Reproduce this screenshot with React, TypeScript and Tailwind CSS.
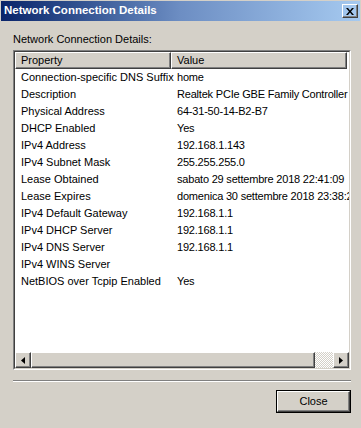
import React from "react";

const rows: [string, string][] = [
  ["Connection-specific DNS Suffix", "home"],
  ["Description", "Realtek PCIe GBE Family Controller"],
  ["Physical Address", "64-31-50-14-B2-B7"],
  ["DHCP Enabled", "Yes"],
  ["IPv4 Address", "192.168.1.143"],
  ["IPv4 Subnet Mask", "255.255.255.0"],
  ["Lease Obtained", "sabato 29 settembre 2018 22:41:09"],
  ["Lease Expires", "domenica 30 settembre 2018 23:38:25"],
  ["IPv4 Default Gateway", "192.168.1.1"],
  ["IPv4 DHCP Server", "192.168.1.1"],
  ["IPv4 DNS Server", "192.168.1.1"],
  ["IPv4 WINS Server", ""],
  ["NetBIOS over Tcpip Enabled", "Yes"],
];

// raised 3d button look
const raised =
  "border border-t-white border-l-white border-r-[#404040] border-b-[#404040] shadow-[inset_-1px_-1px_0_#808080]";

function HeaderCell({ label, className }: { label: string; className: string }) {
  return (
    <div className={`h-[17px] flex items-center pl-[5px] bg-[#d4d0c8] ${raised} ${className}`}>
      {label}
    </div>
  );
}

export default function App() {
  return (
    <div
      className="w-[361px] h-[428px] bg-[#d4d0c8] flex flex-col text-[11px] text-black overflow-hidden"
      style={{ fontFamily: '"Liberation Sans", Arial, sans-serif' }}
    >
      {/* title bar */}
      <div className="h-[20px] mx-[1px] mt-[1px] flex items-center justify-between pl-[3px] pr-[2px] bg-gradient-to-r from-[#0a246a] via-[#6d8ec3] to-[#a6caf0]">
        <span className="text-white font-bold text-[11.5px]">Network Connection Details</span>
        <button className={`w-[16px] h-[14px] flex items-center justify-center ${raised}`}>
          <svg width="8" height="7" viewBox="0 0 8 7">
            <path d="M0 0h2l2 2.5L6 0h2L5 3.5 8 7H6L4 4.5 2 7H0l3-3.5z" fill="#000" />
          </svg>
        </button>
      </div>

      <div className="flex flex-col px-[13px] pr-[10px]">
        <div className="mt-[11px] h-[18px] leading-[14px]">Network Connection Details:</div>

        {/* list box */}
        <div className="h-[320px] flex flex-col border border-t-[#808080] border-l-[#808080] border-r-white border-b-white">
          <div className="flex-1 flex flex-col border border-t-[#404040] border-l-[#404040] border-r-[#d4d0c8] border-b-[#d4d0c8] bg-white min-h-0">
            <div className="flex pr-[2px]">
              <HeaderCell label="Property" className="w-[156px]" />
              <HeaderCell label="Value" className="flex-1" />
            </div>
            <div className="flex-1 overflow-hidden">
              {rows.map(([k, v]) => (
                <div key={k} className="h-[17px] flex items-center whitespace-nowrap">
                  <div className="w-[156px] pl-[6px] shrink-0">{k}</div>
                  <div className="pl-[6px] tracking-[-0.2px]">{v}</div>
                </div>
              ))}
            </div>
            {/* horizontal scrollbar */}
            <div className="h-[16px] flex bg-[#d4d0c8]">
              <div className={`w-[16px] flex items-center justify-center ${raised}`}>
                <svg width="4" height="7" viewBox="0 0 4 7">
                  <path d="M4 0v7L0 3.5z" fill="#000" />
                </svg>
              </div>
              <div className={`w-[284px] ${raised}`} />
              <div className="flex-1 bg-[repeating-conic-gradient(#ffffff_0_25%,#d4d0c8_0_50%)] bg-[length:2px_2px]" />
              <div className={`w-[16px] flex items-center justify-center ${raised}`}>
                <svg width="4" height="7" viewBox="0 0 4 7">
                  <path d="M0 0v7l4-3.5z" fill="#000" />
                </svg>
              </div>
            </div>
          </div>
        </div>

        {/* etched separator */}
        <div className="mt-[10px] border-t border-t-[#808080] border-b border-b-white" />

        <div className="flex justify-end mt-[8px]">
          <button className="w-[75px] h-[23px] border border-black flex">
            <div className={`flex-1 flex items-center justify-center ${raised}`}>Close</div>
          </button>
        </div>
      </div>
    </div>
  );
}
